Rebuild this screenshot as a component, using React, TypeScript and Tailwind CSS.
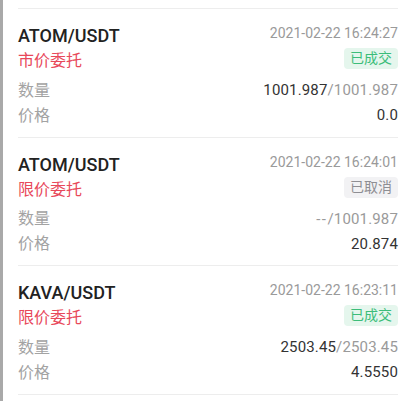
import React from "react";

type Order = {
  pair: string;
  type: string;
  time: string;
  status: "done" | "cancel";
  filled: string;
  total: string;
  price: string;
};

const orders: Order[] = [
  { pair: "ATOM/USDT", type: "市价委托", time: "2021-02-22 16:24:27", status: "done", filled: "1001.987", total: "1001.987", price: "0.0" },
  { pair: "ATOM/USDT", type: "限价委托", time: "2021-02-22 16:24:01", status: "cancel", filled: "--", total: "1001.987", price: "20.874" },
  { pair: "KAVA/USDT", type: "限价委托", time: "2021-02-22 16:23:11", status: "done", filled: "2503.45", total: "2503.45", price: "4.5550" },
];

function Item({ o }: { o: Order }) {
  return (
    <div className="border-t border-[#ededed] pt-[15px] h-[128.5px]">
      <div className="flex justify-between items-start">
        <div className="flex flex-col">
          <span className="text-[18px] leading-[24px] font-medium text-[#222]">{o.pair}</span>
          <span className="text-[16px] leading-[25px] text-[#e8485a]">{o.type}</span>
        </div>
        <div className="flex flex-col items-end">
          <span className="text-[14px] leading-[18px] text-[#9a9a9a]">{o.time}</span>
          {o.status === "done" ? (
            <span className="mt-[6px] h-[21px] px-[6px] rounded-[4px] bg-[#e5f6ed] text-[#3cbd7a] text-[14px] leading-[21px]">已成交</span>
          ) : (
            <span className="mt-[6px] h-[21px] px-[6px] rounded-[4px] bg-[#f2f2f4] text-[#8e8e93] text-[14px] leading-[21px]">已取消</span>
          )}
        </div>
      </div>
      <div className="flex justify-between items-center mt-[5px] h-[25px]">
        <span className="text-[16px] text-[#a3a3a3]">数量</span>
        <span className="text-[15px] tracking-[0.15px] text-[#333]">
          {o.filled === "--" ? <span className="text-[#9a9a9a] tracking-[1.5px]">--</span> : o.filled}
          <span className="text-[#9a9a9a]">/{o.total}</span>
        </span>
      </div>
      <div className="flex justify-between items-center h-[25px]">
        <span className="text-[16px] text-[#a3a3a3]">价格</span>
        <span className="text-[15px] tracking-[0.15px] text-[#333]">{o.price}</span>
      </div>
    </div>
  );
}

export default function App() {
  return (
    <div
      className="w-[415px] h-[401px] bg-white overflow-hidden border-l-[3px] border-[#a9a9a9]"
      style={{ fontFamily: 'Roboto, "Noto Sans CJK SC", sans-serif' }}
    >
      <div className="pl-[15px] pr-[17px] pt-[8px]">
        {orders.map((o, i) => (
          <Item key={i} o={o} />
        ))}
        <div className="border-t border-[#ededed]" />
      </div>
    </div>
  );
}
